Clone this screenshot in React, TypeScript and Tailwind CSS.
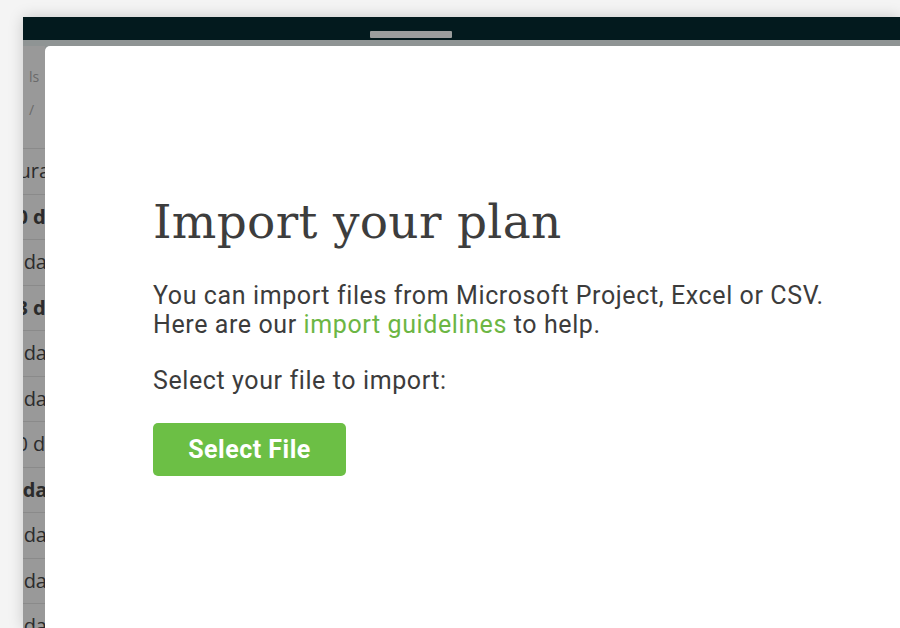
import React from "react";

const rows = [
  { text: "Duration", shift: "-ml-[19px]", bold: false },
  { text: "10 days", shift: "-ml-[18px]", bold: true },
  { text: "5 days", shift: "-ml-[16px]", bold: false },
  { text: "13 days", shift: "-ml-[18px]", bold: true },
  { text: "2 days", shift: "-ml-[16px]", bold: false },
  { text: "4 days", shift: "-ml-[16px]", bold: false },
  { text: "10 days", shift: "-ml-[18px]", bold: false },
  { text: "7 days", shift: "-ml-[17px]", bold: true },
  { text: "3 days", shift: "-ml-[16px]", bold: false },
  { text: "1 days", shift: "-ml-[16px]", bold: false },
  { text: "6 days", shift: "-ml-[16px]", bold: false },
];

export default function App() {
  return (
    <div className="w-[900px] h-[628px] overflow-hidden bg-[#f4f4f4] pl-[23px] pt-[17px]">
      <div className="flex h-full flex-col shadow-[0_0_14px_rgba(0,0,0,0.18)]">
        {/* dimmed app header */}
        <div className="relative h-[23px] shrink-0 bg-[#031a1e]">
          <div className="absolute left-[347px] top-[14px] h-[7px] w-[82px] rounded-[1px] bg-[#9b9d9d]" />
        </div>

        <div className="flex min-h-0 flex-1 bg-[#8f9494]">
          {/* dimmed task table behind the modal */}
          <div className="mt-[6px] w-[22px] shrink-0 overflow-hidden bg-[#999999] font-['Open_Sans',sans-serif] text-[20px] text-[#2b2b2b]">
            <div className="flex h-[102px] flex-col gap-[12px] pl-[6px] pt-[20px] text-[14px] text-[#6a6a6a]">
              <span>ls</span>
              <span>/</span>
            </div>
            {rows.map((r, i) => (
              <div
                key={i}
                className="flex h-[45.5px] items-center border-t border-[#8a8a8a] whitespace-nowrap"
              >
                <span className={`${r.shift} ${r.bold ? "font-bold" : ""}`}>{r.text}</span>
              </div>
            ))}
          </div>

          {/* modal */}
          <div className="mt-[6px] flex-1 rounded-tl-[5px] bg-white pl-[108px] pt-[148px]">
            <h1 className="font-['DejaVu_Serif',serif] text-[47px] leading-[1.2] tracking-[0.3px] text-[#3d3d3d]">
              Import your plan
            </h1>
            <div className="mt-[31px] font-['Roboto',sans-serif] text-[25px] leading-[29px] tracking-[0.6px] text-[#3c3c3c]">
              <p>
                You can import files from Microsoft Project, Excel or CSV.
                <br />
                Here are our{" "}
                <a href="#" className="text-[#6cb644]">
                  import guidelines
                </a>{" "}
                to help.
              </p>
              <p className="mt-[27px]">Select your file to import:</p>
            </div>
            <button className="mt-[28px] h-[53px] w-[193px] rounded-[5px] bg-[#6cbf45] font-['Roboto',sans-serif] text-[25px] font-bold tracking-[0.5px] text-white">
              Select File
            </button>
          </div>
        </div>
      </div>
    </div>
  );
}
